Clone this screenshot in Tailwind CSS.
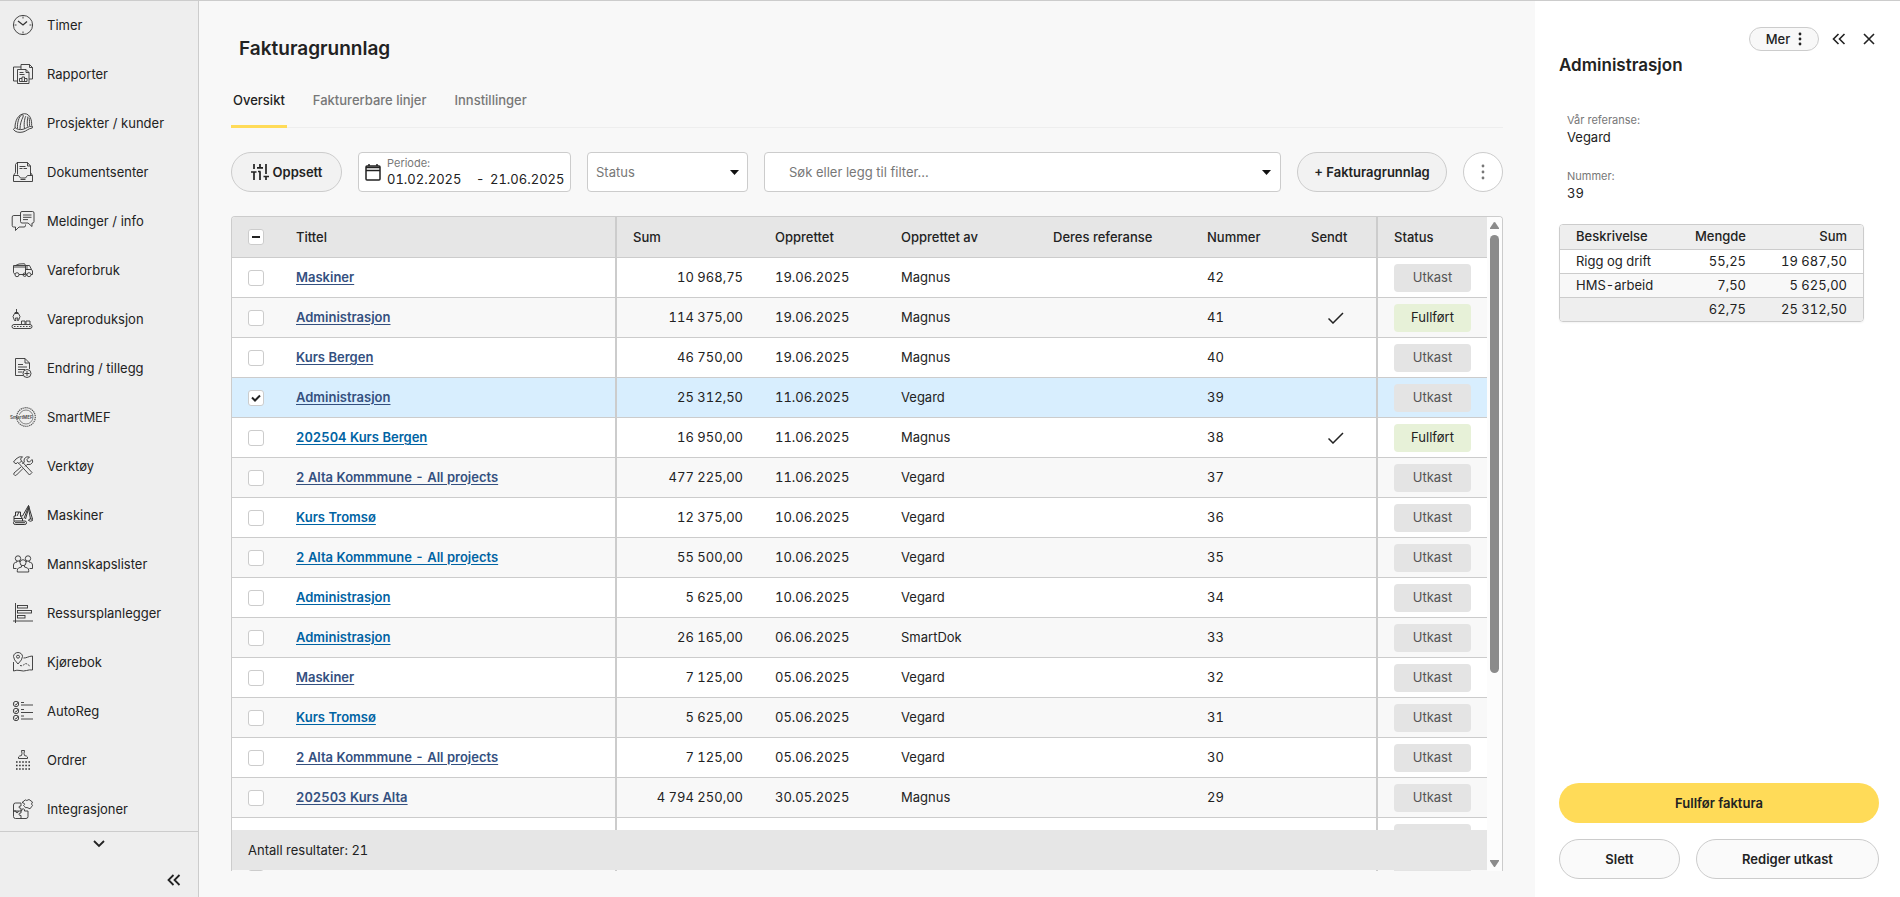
<!DOCTYPE html>
<html lang="nb">
<head>
  <meta charset="UTF-8" />
  <title>Fakturagrunnlag</title>
  <meta name="viewport" content="width=device-width, initial-scale=1">
  <script src="https://cdn.jsdelivr.net/npm/@tailwindcss/browser@4"></script>
</head>
<body class="flex h-screen overflow-hidden border-t border-[#cccccc] bg-[#f8f8f8] font-[Inter,sans-serif] text-[13px] leading-5 text-[#222222]">

  <!-- Sidebar -->
  <aside class="flex w-[199px] shrink-0 flex-col border-r border-[#cccccc] bg-[#eeeeee]">
    <nav class="min-h-0 flex-1 overflow-hidden">
      <a href="#" class="flex h-[49px] items-center gap-[14px] pb-px pl-[13px]">
        <svg class="size-5 shrink-0 overflow-visible" viewBox="0 0 20 20" fill="none" stroke="#333" stroke-width=".9"><circle cx="10" cy="10" r="9.6"/><path d="M10 1.5v2M10 16.5v2M1.5 10h2M16.5 10h2"/><path d="M5 6l5 4 4-3.6" stroke-width="1.3"/></svg>
        Timer
      </a>
      <a href="#" class="flex h-[49px] items-center gap-[14px] pb-px pl-[13px]">
        <svg class="size-5 shrink-0 overflow-visible" viewBox="0 0 20 20" fill="none" stroke="#333" stroke-width=".9"><path d="M4.500 17H.5V3h7.500M8 5V.5h8.500l3 3V15h-3.500M16.500.5v3h3"/><path d="M4.500 5.500h8.500l3 3v11H4.500zM13 5.500v3h3M6.500 8.500h4M6.500 10.500h5M6.500 17.500v-3h2.500v-1.500h2.500v1.500h2.500v3zM9 17.500v-3M11.500 17.500v-3"/></svg>
        Rapporter
      </a>
      <a href="#" class="flex h-[49px] items-center gap-[14px] pb-px pl-[13px]">
        <svg class="size-5 shrink-0 overflow-visible" viewBox="0 0 20 20" fill="none" stroke="#333" stroke-width=".9"><path d="M2 14.500C2 8 5 1 11.500.7 17.500.7 19 8 18.600 12.500"/><path d="M2 14.500l-1.500 2c1.500 2.500 5.500 3.500 9.500 2.500 3.500-.8 5-3.500 9.300-4v-2c-4.300.5-6.300 2.500-9.300 3.300-3 .7-6 .2-8-1.800z"/><path d="M4.500 15.500C4 10 6 3.500 8.500 2c1.500-1 2.200.5 1.500 2C8.500 7 7 11 7 16M11.500 15.500C10.500 10 12 4 13 3M14.500 13.500c-.5-3.500-.2-7.500.5-10M16.500 12.800c.3-3 0-6-.5-8"/></svg>
        Prosjekter / kunder
      </a>
      <a href="#" class="flex h-[49px] items-center gap-[14px] pb-px pl-[13px]">
        <svg class="size-5 shrink-0 overflow-visible" viewBox="0 0 20 20" fill="none" stroke="#333" stroke-width=".9"><path d="M.5 13.500v6h19v-6h-5l-2 2.500h-5l-2-2.500zM.5 13.500l2-3v-8M2.500 2.500l1.500-2h10.500l3 3.500v9.500M4.500 12.500V.5M14.500.5V4h3M6.500 4.500h6M6.500 6.500h3M10.500 6.500h3.500M19.500 13.500l-2-3M7.500 17.500h5"/></svg>
        Dokumentsenter
      </a>
      <a href="#" class="flex h-[49px] items-center gap-[14px] pb-px pl-[13px]">
        <svg class="size-5 shrink-0 overflow-visible" viewBox="0 0 20 20" fill="none" stroke="#333" stroke-width=".9" stroke-linejoin="round"><path d="M9 .5h10.500q1.500 0 1.500 1.500v8.500q0 1.500-1.500 1.500h-.5v3.500L15 12H9q-1.500 0-1.500-1.500V2Q7.500.5 9 .5zM10 4h8.500M10 6.300h8.500M10 8.600h5"/><path d="M7.500 4.500H.8Q-.8 4.500-.8 6v8.500q0 1.500 1.500 1.500h1.800v3.500L6 16h5q1.500 0 1.500-1.500v-1"/></svg>
        Meldinger / info
      </a>
      <a href="#" class="flex h-[49px] items-center gap-[14px] pb-px pl-[13px]">
        <svg class="size-5 shrink-0 overflow-visible" viewBox="0 0 20 20" fill="none" stroke="#333" stroke-width=".9"><path d="M2 14.500L.5 12.500V5.500h12v9H6M2.500 5.500L6 4l5.500-.3 1 1.800M12.500 5.500h4l2 4 1 1.500v3.500h-1.500M14 5.500v4h4.500M12.500 9.500h3M13.500 14.500h.5M.5 7h12"/><circle cx="4" cy="14.700" r="2"/><circle cx="16" cy="14.700" r="2"/><circle cx="11.700" cy="14.700" r="1.700"/></svg>
        Vareforbruk
      </a>
      <a href="#" class="flex h-[49px] items-center gap-[14px] pb-px pl-[13px]">
        <svg class="size-5 shrink-0 overflow-visible" viewBox="0 0 20 20" fill="none" stroke="#333" stroke-width=".9"><path d="M3.500 0v4M1.500 4.500h4l1.500 3-1.500 4h-1l.5-2.500H2.500l.5 2.500H1.500L0 7.500zM2 4.500V3.500h3v1M8.500 15V12h3.500V15M13 15v-3h4V15"/><rect x="-1" y="15.500" width="20" height="4" rx="2"/><path d="M1 17.500h1.500M4 17.500h1.500M7 17.500h1.500M10 17.500h1.500M13 17.500h1.500M16 17.500h1.500"/></svg>
        Vareproduksjon
      </a>
      <a href="#" class="flex h-[49px] items-center gap-[14px] pb-px pl-[13px]">
        <svg class="size-5 shrink-0 overflow-visible" viewBox="0 0 20 20" fill="none" stroke="#333" stroke-width=".9"><path d="M10 17.500H2.500V.5H12L16.500 5v6M12 .5V5h4.500M5 6.500h5M5 9h9M5 11.500h7M5 14h4.500"/><circle cx="14" cy="15.500" r="4"/><path d="M14 13v5M11.500 15.500h5"/></svg>
        Endring / tillegg
      </a>
      <a href="#" class="flex h-[49px] items-center gap-[14px] pb-px pl-[13px]">
        <svg class="size-5 shrink-0 overflow-visible" viewBox="0 0 20 20" fill="none" stroke="#555" stroke-width=".7"><circle cx="13" cy="10" r="9.300" stroke-width="1.200" stroke-dasharray="1.300 .7"/><circle cx="13" cy="10" r="7"/><rect x="5" y="8" width="14" height="4" fill="#eee" stroke="none"/><text x="-3" y="11.700" font-size="4.500" font-weight="600" fill="#444" stroke="none">SmartMEF</text></svg>
        SmartMEF
      </a>
      <a href="#" class="flex h-[49px] items-center gap-[14px] pb-px pl-[13px]">
        <svg class="size-5 shrink-0 overflow-visible" viewBox="0 0 20 20" fill="none" stroke="#333" stroke-width=".9" stroke-linejoin="round"><path d="M.5 6l2.500-3Q6 0 9.500.8L7.500 3l1 2-2.500 2.500-1.500-1L3 7.800zM6 7.500L16.500 19l2.500-2.500L8.500 5"/><path d="M19 3.500L16.500 6l-2-.5-.5-2L16.500 1q-3-1-5 1.500-.8 1.500-.2 3.500l-2 2M8 11L1 17q-.8 1.500.7 2.300 1 .5 1.800-.3L10 12.500M12 10.500l2-2q4 .8 5.500-2 .5-1.500-.5-3"/></svg>
        Verktøy
      </a>
      <a href="#" class="flex h-[49px] items-center gap-[14px] pb-px pl-[13px]">
        <svg class="size-5 shrink-0 overflow-visible" viewBox="0 0 20 20" fill="none" stroke="#333" stroke-width="1"><rect x=".5" y="16" width="13" height="3.500" rx="1.700"/><path d="M2 17.700h10M1 16v-5h1.500V7h5v4l2 2.500V16M1 13.500h8M4 11l2-4M7.500 11h2l6-10.500L16 2 12.500 14M11 13.500l4.500-12M15.500.5l4 13.500M15.500 3l2 11q2.500-.5 2 1.500-2 1.500-4 0 0-1.500 2-1.500"/></svg>
        Maskiner
      </a>
      <a href="#" class="flex h-[49px] items-center gap-[14px] pb-px pl-[13px]">
        <svg class="size-5 shrink-0 overflow-visible" viewBox="0 0 20 20" fill="none" stroke="#333" stroke-width=".9"><circle cx="5" cy="4.500" r="2.700"/><circle cx="15" cy="4.500" r="2.700"/><circle cx="10" cy="8.700" r="3"/><path d="M8.500 11.500v1.500l-3 1q-1.200.7-1.200 2.500v1.500h11.400v-1.500q0-1.800-1.200-2.500l-3-1v-1.500M3.500 14.500h-3V11q0-2 1.800-2.500L4 8V7M6 7.200L7 8M16.500 14.500h3V11q0-2-1.800-2.500L16 8V7M14 7.200L13 8"/></svg>
        Mannskapslister
      </a>
      <a href="#" class="flex h-[49px] items-center gap-[14px] pb-px pl-[13px]">
        <svg class="size-5 shrink-0 overflow-visible" viewBox="0 0 20 20" fill="none" stroke="#333" stroke-width=".9"><path d="M2.500 0v20M0 18h20"/><rect x="4.500" y="2.500" width="10" height="2.500"/><rect x="4.500" y="7.500" width="14" height="2.500"/><rect x="4.500" y="12.500" width="7.500" height="2.500"/></svg>
        Ressursplanlegger
      </a>
      <a href="#" class="flex h-[49px] items-center gap-[14px] pb-px pl-[13px]">
        <svg class="size-5 shrink-0 overflow-visible" viewBox="0 0 20 20" fill="none" stroke="#333" stroke-width=".9"><path d="M5 12Q.5 7.500.5 4.500a4.500 4 0 019 0Q9.500 7.500 5 12z"/><circle cx="5" cy="4.700" r="1.500"/><path d="M.5 10v9q3.500-1.300 6.500-.5 3.500 1 6.500 0 3-1 6-.5V4q-3 .3-5 1.200-1.800.8-4 .8"/><path d="M7 13.500q3 .8 4-1 1.500-1.500 3-.5t3.500 2.500" stroke-dasharray="2 1"/></svg>
        Kjørebok
      </a>
      <a href="#" class="flex h-[49px] items-center gap-[14px] pb-px pl-[13px]">
        <svg class="size-5 shrink-0 overflow-visible" viewBox="0 0 20 20" fill="none" stroke="#333" stroke-width=".9"><circle cx="3" cy="3" r="2.700"/><circle cx="3" cy="10" r="2.700"/><circle cx="3" cy="17" r="2.700"/><path d="M1.700 3l1.200 1.200L5.500.8M1.700 10l1.200 1.200 2.600-3.400M1.700 17l1.200 1.200 2.600-3.400M8 1.500h3M8 4h12M8 8.500h3M8 11.500h12M8 15h3M8 18h12"/></svg>
        AutoReg
      </a>
      <a href="#" class="flex h-[49px] items-center gap-[14px] pb-px pl-[13px]">
        <svg class="size-5 shrink-0 overflow-visible" viewBox="0 0 20 20" fill="none" stroke="#333" stroke-width=".9"><path d="M5.500 8.500v-1.500q.3-1 3-1.500L9 3.500 8.500.5h3L11 3.500l.5 2q2.700.5 3 1.500v1.500z"/><path d="M3 12h14M3 15.500h14M3 19h14" stroke-width="1.300" stroke-dasharray="1.600 1.500"/></svg>
        Ordrer
      </a>
      <a href="#" class="flex h-[49px] items-center gap-[14px] pb-px pl-[13px]">
        <svg class="size-5 shrink-0 overflow-visible" viewBox="0 0 20 20" fill="none" stroke="#333" stroke-width=".9" stroke-linejoin="round"><path d="M8 4H2.500Q.5 4 .5 6v11.500q0 2 2 2H13q2 0 2-2V12H11.500q.5-2-1.200-2.200T8.500 12H.5M8 4v3q-1.800-.4-2 1t2 1.300V12M8 12v2q-2-.3-2 1.200T8 16.500v3M.5 12H3q-.3 1.800 1 1.800T5.300 12"/><path d="M9 3.500L11 2q1-2 2.800-.5L16 .5 19.500 3l-1 2q2 1.500 0 2.800l-1.500 2L14 8.500q-2 1-2.300-1L10.500 6.500q2-1 .3-2.500z"/></svg>
        Integrasjoner
      </a>
    </nav>
    <div class="h-[66px] shrink-0 border-t border-[#cccccc]">
      <button type="button" aria-label="Vis flere" class="flex h-6 w-full items-center justify-center">
        <svg class="size-3" viewBox="0 0 12 12" fill="none" stroke="#222" stroke-width="1.800"><path d="M1 3l5 5 5-5"/></svg>
      </button>
      <button type="button" aria-label="Skjul meny" class="mt-4 mr-4 ml-auto flex h-4 w-4 items-center justify-center">
        <svg class="h-3 w-[14px]" viewBox="0 0 14 12" fill="none" stroke="#222" stroke-width="1.800"><path d="M6.500 1L1.500 6l5 5M12.500 1l-5 5 5 5"/></svg>
      </button>
    </div>
  </aside>

  <!-- Main content -->
  <main class="flex min-w-0 flex-1 flex-col px-8 pt-[34px] pb-[26px]">
    <h1 class="pl-2 text-[19px] leading-7 font-semibold">Fakturagrunnlag</h1>

    <nav class="mt-[23px] flex gap-6 border-b border-[#eeeeee] leading-7 font-medium text-[#777777]">
      <a href="#" class="-mb-px border-b-3 border-[#ffdb58] px-[2px] pb-[11px] text-[#222222]">Oversikt</a>
      <a href="#" class="px-[2px]">Fakturerbare linjer</a>
      <a href="#" class="px-[2px]">Innstillinger</a>
    </nav>

    <!-- Filters -->
    <div class="mt-6 flex shrink-0 gap-4">
      <button type="button" class="flex h-10 w-[111px] items-center justify-center gap-1 rounded-full border border-[#cccccc] bg-[#f2f2f2] font-semibold">
        <svg class="h-4 w-[18px]" viewBox="0 0 18 16" fill="none" stroke="#222" stroke-width="1.700"><path d="M3 0v5M0 8h5.500M3 8v8M9 0v3M6 3.800h6M9 7.500V16M7 7.500h2.500M15 0v10M12.500 12.500H18M15 12.500V16"/></svg>
        Oppsett
      </button>

      <div class="flex h-10 w-[213px] items-center gap-[6px] rounded border border-[#cccccc] bg-white pl-[6px]">
        <svg class="h-[17px] w-4 shrink-0" viewBox="0 0 16 17" fill="none" stroke="#222" stroke-width="1.500"><rect x="1" y="2" width="14" height="14" rx="1"/><path d="M1 3.500h14M1 6.500h14M4 0v2M12 0v2"/></svg>
        <div class="min-w-0 flex-1 pb-[3px]">
          <label for="fra" class="block text-[11px] leading-4 text-[#777777]">Periode:</label>
          <div class="flex leading-4 tabular-nums">
            <input type="text" id="fra" value="01.02.2025" class="w-[89px]" />
            <span class="w-[14px]">-</span>
            <input type="text" aria-label="Til dato" value="21.06.2025" class="w-20" />
          </div>
        </div>
      </div>

      <div class="grid h-10 w-[161px] items-center rounded border border-[#cccccc] bg-white">
        <select aria-label="Status" class="col-start-1 row-start-1 h-full w-full appearance-none px-2 text-[#777777]">
          <option>Status</option>
          <option>Utkast</option>
          <option>Fullført</option>
        </select>
        <svg class="pointer-events-none col-start-1 row-start-1 mr-2 h-[5px] w-[9px] justify-self-end" viewBox="0 0 9 5" fill="#111"><path d="M0 0h9L4.500 5z"/></svg>
      </div>

      <div class="flex h-10 min-w-0 flex-1 items-center rounded border border-[#cccccc] bg-white pr-[6px] pl-6">
        <input type="text" aria-label="Søk" placeholder="Søk eller legg til filter..." class="min-w-0 flex-1 placeholder:text-[#777777]" />
        <button type="button" aria-label="Vis filtre" class="flex h-6 w-4 items-center justify-center">
          <svg class="h-[5px] w-[9px]" viewBox="0 0 9 5" fill="#111"><path d="M0 0h9L4.500 5z"/></svg>
        </button>
      </div>

      <button type="button" class="h-10 w-[150px] rounded-full border border-[#cccccc] bg-[#f2f2f2] font-semibold">+ Fakturagrunnlag</button>
      <button type="button" aria-label="Flere valg" class="flex size-10 items-center justify-center rounded-full border border-[#cccccc] bg-white">
        <svg class="h-4 w-1" viewBox="0 0 4 16" fill="#777"><circle cx="2" cy="2" r="1.400"/><circle cx="2" cy="8" r="1.400"/><circle cx="2" cy="14" r="1.400"/></svg>
      </button>
    </div>

    <!-- Invoice list -->
    <div class="mt-6 flex min-h-0 flex-1 overflow-hidden rounded-t border border-b-0 border-[#cccccc] bg-white">
      <div class="relative min-w-0 flex-1 overflow-hidden">
        <table class="w-full table-fixed border-separate border-spacing-0 tabular-nums">
          <colgroup>
            <col class="w-12"><col><col class="w-[142px]"><col class="w-[126px]"><col class="w-[152px]"><col class="w-[154px]"><col class="w-[104px]"><col class="w-[83px]"><col class="w-[109px]">
          </colgroup>
          <thead>
            <tr class="h-[41px] bg-[#e6e6e6] text-left *:border-b *:border-[#cccccc] *:px-4 *:pb-px *:font-medium">
              <th>
                <span class="grid size-4 place-items-center">
                  <input type="checkbox" aria-label="Velg alle" class="col-start-1 row-start-1 size-4 appearance-none rounded-[3px] border border-[#cccccc] bg-white" />
                  <span class="pointer-events-none col-start-1 row-start-1 h-[2px] w-2 bg-[#222222]"></span>
                </span>
              </th>
              <th class="border-r-2">Tittel</th>
              <th>Sum</th>
              <th>Opprettet</th>
              <th>Opprettet av</th>
              <th>Deres referanse</th>
              <th>Nummer</th>
              <th class="border-r-2">Sendt</th>
              <th>Status</th>
            </tr>
          </thead>
          <tbody id="rows"></tbody>
        </table>
        <div class="absolute inset-x-0 bottom-px flex h-10 items-center bg-[#e6e6e6] px-4 pb-px tabular-nums">Antall resultater: 21</div>
      </div>

      <!-- Scrollbar -->
      <div class="flex w-[15px] shrink-0 flex-col items-center bg-[#fcfcfc] pt-[5px] pb-1">
        <svg class="h-[7px] w-[9px] shrink-0" viewBox="0 0 9 7" fill="#8b8b8b"><path d="M3.700.6q.8-1 1.600 0L9 6v1H0V6z"/></svg>
        <div class="mt-[6px] flex w-[9px] flex-1 flex-col">
          <div class="h-[70%] rounded-full bg-[#8b8b8b]"></div>
        </div>
        <svg class="h-[7px] w-[9px] shrink-0" viewBox="0 0 9 7" fill="#8b8b8b"><path d="M3.700 6.400q.8 1 1.600 0L9 1V0H0v1z"/></svg>
      </div>
    </div>
  </main>

  <!-- Details panel -->
  <aside class="flex w-[365px] shrink-0 flex-col bg-white pr-[21px] pb-[18px] pl-6">
    <div class="mt-[26px] flex h-6 items-center justify-end pr-[2px]">
      <button type="button" class="flex h-6 w-[70px] items-center justify-center gap-2 rounded-full border border-[#cccccc] bg-[#f8f8f8] font-medium">
        Mer
        <svg class="h-[14px] w-1" viewBox="0 0 4 14" fill="#222"><circle cx="2" cy="2" r="1.400"/><circle cx="2" cy="7" r="1.400"/><circle cx="2" cy="12" r="1.400"/></svg>
      </button>
      <button type="button" aria-label="Utvid" class="ml-3 flex size-4 items-center justify-center">
        <svg class="h-3 w-[14px]" viewBox="0 0 14 12" fill="none" stroke="#222" stroke-width="1.600"><path d="M6.500 1L1.500 6l5 5M12.500 1l-5 5 5 5"/></svg>
      </button>
      <button type="button" aria-label="Lukk" class="ml-[14px] flex size-4 items-center justify-center">
        <svg class="size-3" viewBox="0 0 12 12" fill="none" stroke="#222" stroke-width="1.600"><path d="M1 1l10 10M11 1L1 11"/></svg>
      </button>
    </div>
    <h2 class="mt-[2px] text-[17px] leading-6 font-semibold">Administrasjon</h2>

    <dl class="mt-[35px] pl-2">
      <dt class="text-[11px] leading-4 text-[#777777]">Vår referanse:</dt>
      <dd class="leading-[18px]">Vegard</dd>
      <dt class="mt-[22px] text-[11px] leading-4 text-[#777777]">Nummer:</dt>
      <dd class="leading-[18px] tabular-nums">39</dd>
    </dl>

    <div class="mt-[22px] mr-[15px] overflow-hidden rounded border border-[#cccccc] shadow-xs">
      <table class="w-full text-right leading-[22px] tabular-nums *:*:*:pb-px">
        <thead>
          <tr class="h-6 bg-[#eeeeee] *:font-medium">
            <th class="pl-4 text-left">Beskrivelse</th>
            <th>Mengde</th>
            <th class="w-[117px] pr-4">Sum</th>
          </tr>
        </thead>
        <tbody>
          <tr class="border-t border-[#cccccc]"><td class="pl-4 text-left">Rigg og drift</td><td>55,25</td><td class="pr-4">19 687,50</td></tr>
          <tr class="border-t border-[#cccccc] bg-[#f8f8f8]"><td class="pl-4 text-left">HMS-arbeid</td><td>7,50</td><td class="pr-4">5 625,00</td></tr>
        </tbody>
        <tfoot>
          <tr class="border-t border-[#cccccc] bg-[#eeeeee]"><td></td><td>62,75</td><td class="pr-4">25 312,50</td></tr>
        </tfoot>
      </table>
    </div>

    <div class="mt-auto grid grid-cols-[121px_1fr] gap-4 font-semibold">
      <button type="button" class="col-span-2 h-10 rounded-full bg-[#ffdb58]">Fullfør faktura</button>
      <button type="button" class="h-10 rounded-full border border-[#cccccc] bg-[#fafafa]">Slett</button>
      <button type="button" class="h-10 rounded-full border border-[#cccccc] bg-[#fafafa]">Rediger utkast</button>
    </div>
  </aside>

  <script>
    const invoices = [
      { title: "Maskiner", visited: true, sum: "10 968,75", date: "19.06.2025", by: "Magnus", no: 42 },
      { title: "Administrasjon", visited: true, sum: "114 375,00", date: "19.06.2025", by: "Magnus", no: 41, done: true },
      { title: "Kurs Bergen", visited: true, sum: "46 750,00", date: "19.06.2025", by: "Magnus", no: 40 },
      { title: "Administrasjon", visited: true, sum: "25 312,50", date: "11.06.2025", by: "Vegard", no: 39, selected: true },
      { title: "202504 Kurs Bergen", sum: "16 950,00", date: "11.06.2025", by: "Magnus", no: 38, done: true },
      { title: "2 Alta Kommmune - All projects", visited: true, sum: "477 225,00", date: "11.06.2025", by: "Vegard", no: 37 },
      { title: "Kurs Tromsø", sum: "12 375,00", date: "10.06.2025", by: "Vegard", no: 36 },
      { title: "2 Alta Kommmune - All projects", sum: "55 500,00", date: "10.06.2025", by: "Vegard", no: 35 },
      { title: "Administrasjon", sum: "5 625,00", date: "10.06.2025", by: "Vegard", no: 34 },
      { title: "Administrasjon", sum: "26 165,00", date: "06.06.2025", by: "SmartDok", no: 33 },
      { title: "Maskiner", visited: true, sum: "7 125,00", date: "05.06.2025", by: "Vegard", no: 32 },
      { title: "Kurs Tromsø", sum: "5 625,00", date: "05.06.2025", by: "Vegard", no: 31 },
      { title: "2 Alta Kommmune - All projects", visited: true, sum: "7 125,00", date: "05.06.2025", by: "Vegard", no: 30 },
      { title: "202503 Kurs Alta", visited: true, sum: "4 794 250,00", date: "30.05.2025", by: "Magnus", no: 29 },
      { title: "", sum: "", date: "", by: "", no: "" },
      { title: "", sum: "", date: "", by: "", no: "" }
    ];

    const tick = '<svg class="pointer-events-none col-start-1 row-start-1 h-2 w-[10px]" viewBox="0 0 10 8" fill="none" stroke="#222" stroke-width="2"><path d="M1 3.500L4 6.500 9 1.500"/></svg>';
    const sent = '<svg class="mx-auto h-3 w-4" viewBox="0 0 16 12" fill="none" stroke="#222" stroke-width="1.500"><path d="M.5 6.500L5 11 15 1"/></svg>';

    document.getElementById("rows").innerHTML = invoices.map((row, i) => {
      const bg = row.selected ? "bg-[#d8eefe]" : i % 2 ? "bg-[#f8f8f8]" : "bg-white";
      const link = row.visited ? "text-[#34507f]" : "text-[#0063a3]";
      const badge = row.done ? "bg-[#e7f1d8]" : "bg-[#e4e4e4] text-[#555555]";
      const status = row.done ? "Fullført" : row.no ? "Utkast" : "";
      return `
        <tr class="h-10 ${bg} *:border-b *:border-[#cccccc] *:px-4">
          <td>
            <span class="grid size-4 place-items-center">
              <input type="checkbox" aria-label="Velg ${row.title}" ${row.selected ? "checked" : ""} class="col-start-1 row-start-1 size-4 appearance-none rounded-[3px] border border-[#cccccc] bg-white" />
              ${row.selected ? tick : ""}
            </span>
          </td>
          <td class="border-r-2 pb-px font-semibold"><a href="#" class="underline underline-offset-2 ${link}">${row.title}</a></td>
          <td class="pb-px text-right">${row.sum}</td>
          <td class="pb-px">${row.date}</td>
          <td class="pb-px">${row.by}</td>
          <td></td>
          <td class="pb-px">${row.no}</td>
          <td class="border-r-2">${row.done ? sent : ""}</td>
          <td><span class="block h-7 rounded text-center leading-[27px] ${badge}">${status}</span></td>
        </tr>`;
    }).join("");
  </script>

</body>
</html>
